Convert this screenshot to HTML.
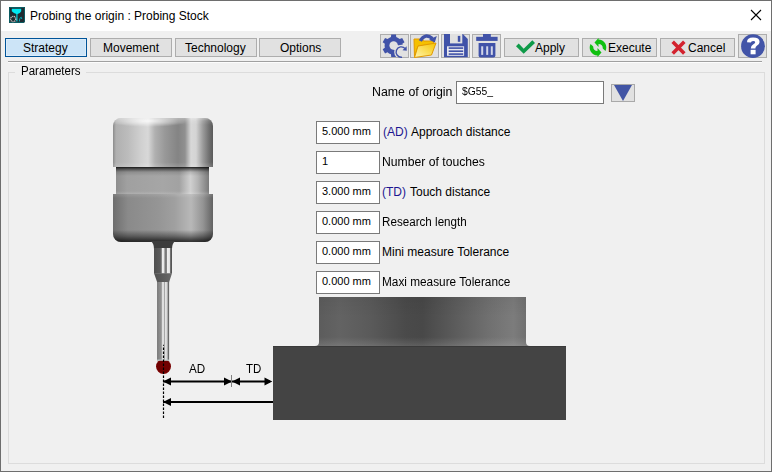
<!DOCTYPE html>
<html><head><meta charset="utf-8">
<style>
*{margin:0;padding:0;box-sizing:border-box}
html,body{width:772px;height:472px;overflow:hidden;background:#f0f0f0}
body{position:relative;font-family:"Liberation Sans",sans-serif;font-size:12px;color:#000}
.a{position:absolute}
.t{position:absolute;white-space:nowrap;line-height:14px;font-size:12px}
.btn{position:absolute;background:#e1e1e1;border:1px solid #adadad}
.ib{position:absolute;background:#e1e1e1;border:1px solid #adadad;top:34px;width:29px;height:24px}
.inp{position:absolute;background:#fff;border:1px solid #7a7a7a;left:316px;width:64px;height:23px}
.inpt{position:absolute;left:322px;font-size:11px;line-height:14px;white-space:nowrap}
</style></head><body>
<!-- window frame -->
<div class="a" style="left:0;top:0;width:772px;height:472px;border:1px solid #6e6e6e"></div>
<div class="a" style="left:1px;top:1px;width:770px;height:30px;background:#fff"></div>
<!-- title icon -->
<svg class="a" style="left:9px;top:7px" width="16" height="16" viewBox="0 0 16 16">
<path d="M0 0 H16 V14 Q16 16 14 16 H0Z" fill="#1f2a30"/>
<path d="M0.5 0.5 H15.5 V14 Q15.5 15.5 14 15.5 H0.5Z" fill="none" stroke="#0b5c62" stroke-width="1"/>
<path d="M2.8 1.8 H12.2 V4.2 Q11.5 6.4 8 7.2 Q4.5 6.4 2.8 4.2Z" fill="#00e8f2"/>
<rect x="7.3" y="7" width="1.2" height="7.5" fill="#00d0dc"/>
<circle cx="4.2" cy="12" r="2.6" fill="none" stroke="#bdbdbd" stroke-width="1.4" stroke-dasharray="1.2 0.6"/>
<path d="M10.3 14.5 L10.8 11.5 L12.2 10.2 L12.8 12" stroke="#00b8c8" stroke-width="0.9" fill="none"/>
</svg>
<div class="t" style="left:30px;top:9px">Probing the origin : Probing Stock</div>
<svg class="a" style="left:750px;top:9px" width="12" height="12" viewBox="0 0 12 12">
<path d="M1 1 L11 11 M11 1 L1 11" stroke="#000" stroke-width="1.1"/>
</svg>

<!-- tabs -->
<div class="btn" style="left:5px;top:38px;width:82px;height:19px;background:#cce4f7;border-color:#005499;box-shadow:inset 0 0 0 1px #dcecf9"></div>
<div class="t" style="left:23px;top:41px">Strategy</div>
<div class="btn" style="left:90px;top:38px;width:82px;height:19px"></div>
<div class="t" style="left:103px;top:41px">Movement</div>
<div class="btn" style="left:175px;top:38px;width:82px;height:19px"></div>
<div class="t" style="left:185px;top:41px">Technology</div>
<div class="btn" style="left:259px;top:38px;width:82px;height:19px"></div>
<div class="t" style="left:280px;top:41px">Options</div>

<!-- icon buttons -->
<div class="ib" style="left:380px"></div>
<div class="ib" style="left:410px"></div>
<div class="ib" style="left:441px"></div>
<div class="ib" style="left:472px"></div>


<div class="btn" style="left:504px;top:38px;width:75px;height:19px"></div>
<div class="t" style="left:535px;top:41px">Apply</div>
<div class="btn" style="left:582px;top:38px;width:75px;height:19px"></div>
<div class="t" style="left:608px;top:41px">Execute</div>
<div class="btn" style="left:660px;top:38px;width:75px;height:19px"></div>
<div class="t" style="left:688px;top:41px">Cancel</div>
<div class="ib" style="left:738px"></div>
<svg class="a" style="left:0;top:0" width="772" height="62">
<!-- gear -->
<defs><mask id="gm"><rect x="370" y="30" width="50" height="32" fill="#fff"/><circle cx="393.6" cy="45.5" r="4.2" fill="#000"/><circle cx="401.5" cy="52" r="7.3" fill="#000"/><path d="M393.6 45.5 L401.5 52" stroke="#000" stroke-width="6"/></mask></defs>
<path mask="url(#gm)" fill="#4052a8" d="M389.51 37.68 L390.97 37.09 L391.21 34.45 L395.99 34.45 L396.23 37.09 L397.69 37.68 L398.50 38.15 L399.74 39.12 L402.15 38.00 L404.54 42.15 L402.37 43.68 L402.59 45.23 L402.59 46.17 L402.37 47.72 L404.54 49.25 L402.15 53.40 L399.74 52.28 L398.50 53.25 L397.69 53.72 L396.23 54.31 L395.99 56.95 L391.21 56.95 L390.97 54.31 L389.51 53.72 L388.70 53.25 L387.46 52.28 L385.05 53.40 L382.66 49.25 L384.83 47.72 L384.61 46.17 L384.61 45.23 L384.83 43.68 L382.66 42.15 L385.05 38.00 L387.46 39.12 L388.70 38.15Z"/>
<path d="M405.2 48.6 A5.2 5.2 0 1 0 402 57.2" fill="none" stroke="#4052a8" stroke-width="1.4"/>
<path d="M402.5 50.2 L406.8 50.8 L406.6 46.2Z" fill="#4052a8"/>
<!-- folder -->
<path d="M414 39 H422.5 L423.5 41 H433.5 V44.5 L418 46 L414.5 57.5Z" fill="#f5c000" stroke="#e29a00" stroke-width="1"/>
<path d="M418 46 L436 43 L431.5 55 L414.5 57.5Z" fill="url(#fg)" stroke="#e29a00" stroke-width="1"/>
<defs><linearGradient id="fg" x1="0" y1="1" x2="1" y2="0"><stop offset="0" stop-color="#fff6b0"/><stop offset="1" stop-color="#f5c400"/></linearGradient></defs>
<path d="M420.3 41 Q425 32.5 432.5 38.5" fill="none" stroke="#4052a8" stroke-width="3.4"/>
<path d="M429 39.8 L436.8 36 L434.8 42.5Z" fill="#4052a8"/>
<!-- floppy -->
<path d="M444 34 H462.8 L467.8 39 V57.3 H444Z" fill="#4052a8"/>
<rect x="450" y="34" width="12.3" height="9.4" fill="#e1e1e1"/>
<rect x="457.8" y="35.9" width="2.5" height="5.9" fill="#4052a8"/>
<rect x="447" y="46.3" width="17.1" height="9.5" fill="#e8e8ee"/>
<rect x="448.7" y="47.3" width="14.5" height="1.6" fill="#4052a8"/>
<rect x="448.7" y="50.4" width="14.5" height="1.6" fill="#4052a8"/>
<rect x="448.7" y="53.3" width="14.5" height="1.6" fill="#4052a8"/>
<!-- trash -->
<rect x="483" y="34" width="7.8" height="3" fill="#4052a8"/>
<rect x="476.2" y="36.8" width="21.4" height="4.1" fill="#4052a8"/>
<path d="M478.6 43.1 H495.4 V55.6 Q495.4 57.6 493.4 57.6 H480.6 Q478.6 57.6 478.6 55.6Z" fill="#4052a8"/>
<rect x="481.2" y="46.3" width="2" height="8.6" fill="#d0d4e8"/>
<rect x="486.2" y="46.3" width="2" height="8.6" fill="#d0d4e8"/>
<rect x="490.8" y="46.3" width="2" height="8.6" fill="#d0d4e8"/>
<!-- check -->
<path d="M516 46.2 L518.7 43.5 L523.7 48.8 L532.3 40.3 L535 43 L523.7 53.8Z" fill="#0e9a48"/>
<!-- sync -->
<g fill="#10c010">
<path d="M605.5 51 A8 8 0 0 0 598.5 39.5 L598.5 38 L594.5 42.5 L598.5 47 L598.5 44 A4.5 4.5 0 0 1 602.8 48.5 Q604 49.6 605.5 51Z"/>
<path d="M605.5 51 A8 8 0 0 0 598.5 39.5 L598.5 38 L594.5 42.5 L598.5 47 L598.5 44 A4.5 4.5 0 0 1 602.8 48.5 Q604 49.6 605.5 51Z" transform="rotate(180 598 47.5)"/>
</g>
<!-- red x -->
<path d="M672.7 41.8 L684.3 53.4 M684.3 41.8 L672.7 53.4" stroke="#d3222e" stroke-width="3.6"/>
<!-- help -->
<circle cx="753" cy="46.2" r="11.9" fill="#4254a8"/>
<path d="M747 42.2 Q747 37.6 753 37.6 Q759.6 37.6 759.6 42 Q759.6 44.6 756.6 46 Q755.4 46.8 755.4 48.5 H750.8 Q750.8 45.6 753.4 44.2 Q755.2 43.2 755.2 42.2 Q755.2 41 753.1 41 Q751 41 750.9 42.6Z" fill="#fff"/>
<rect x="750.6" y="49.8" width="5" height="4.5" fill="#fff"/>
</svg>

<!-- separator -->
<div class="a" style="left:8px;top:61px;width:754px;height:1px;background:#a0a0a0"></div>
<div class="a" style="left:8px;top:62px;width:754px;height:1px;background:#fcfcfc"></div>

<!-- group box -->
<div class="a" style="left:8px;top:72px;width:757px;height:392px;border:1px solid #dcdcdc"></div>
<div class="a" style="left:15px;top:66px;width:71px;height:12px;background:#f0f0f0"></div>
<div class="t" style="left:20.5px;top:64px;transform:scaleX(.96);transform-origin:0 0">Parameters</div>

<!-- name of origin -->
<div class="t" style="left:371.6px;top:85px;transform:scaleX(1.03);transform-origin:0 0">Name of origin</div>
<div class="a" style="left:456px;top:81px;width:148px;height:23px;background:#fff;border:1px solid #7a7a7a"></div>
<div class="inpt" style="left:462px;top:84px;transform:scaleX(.94);transform-origin:0 0">$G55_</div>
<div class="btn" style="left:611px;top:84px;width:24px;height:18px;border-color:#a9a9a9"></div>
<svg class="a" style="left:611px;top:84px" width="24" height="18"><path d="M3 1 H21 L12 17Z" fill="#4255a5"/></svg>

<!-- inputs -->
<div class="inp" style="top:121px"></div><div class="inpt" style="top:124px">5.000 mm</div>
<div class="t" style="left:383px;top:125px;color:#1c1690">(AD)</div><div class="t" style="left:411px;top:125px">Approach distance</div>
<div class="inp" style="top:151px"></div><div class="inpt" style="top:154px">1</div>
<div class="t" style="left:382px;top:155px;transform:scaleX(1.015);transform-origin:0 0">Number of touches</div>
<div class="inp" style="top:181px"></div><div class="inpt" style="top:184px">3.000 mm</div>
<div class="t" style="left:382px;top:185px;color:#1c1690">(TD)</div><div class="t" style="left:410px;top:185px">Touch distance</div>
<div class="inp" style="top:211px"></div><div class="inpt" style="top:214px">0.000 mm</div>
<div class="t" style="left:382px;top:215px;transform:scaleX(.97);transform-origin:0 0">Research length</div>
<div class="inp" style="top:241px"></div><div class="inpt" style="top:244px">0.000 mm</div>
<div class="t" style="left:382px;top:245px">Mini measure Tolerance</div>
<div class="inp" style="top:271px"></div><div class="inpt" style="top:274px">0.000 mm</div>
<div class="t" style="left:382px;top:275px;transform:scaleX(.984);transform-origin:0 0">Maxi measure Tolerance</div>

<!-- workpiece -->
<svg class="a" style="left:265px;top:290px" width="310" height="135" viewBox="265 290 310 135">
<defs>
<linearGradient id="wpg" x1="319" x2="526" gradientUnits="userSpaceOnUse">
<stop offset="0" stop-color="#5c5c5c"/><stop offset=".1" stop-color="#636363"/><stop offset=".25" stop-color="#5a5a5a"/><stop offset=".42" stop-color="#4a4a4a"/><stop offset=".5" stop-color="#484848"/><stop offset=".63" stop-color="#585858"/><stop offset=".82" stop-color="#707070"/><stop offset=".94" stop-color="#7c7c7c"/><stop offset="1" stop-color="#707070"/>
</linearGradient>
<linearGradient id="wpv" x1="0" x2="0" y1="297" y2="347" gradientUnits="userSpaceOnUse">
<stop offset="0" stop-color="#000" stop-opacity=".05"/><stop offset=".4" stop-color="#000" stop-opacity="0"/><stop offset=".8" stop-color="#fff" stop-opacity="0"/><stop offset=".92" stop-color="#fff" stop-opacity=".08"/><stop offset="1" stop-color="#fff" stop-opacity=".14"/>
</linearGradient>
</defs>
<path d="M319 297 H526 V342 Q526 346 530 346 H315 Q319 346 319 342Z" fill="url(#wpg)"/>
<path d="M319 297 H526 V342 Q526 346 530 346 H315 Q319 346 319 342Z" fill="url(#wpv)"/>
<rect x="273" y="346" width="293" height="74" fill="#444"/>
<rect x="273" y="346" width="293" height="1" fill="#3a3a3a"/>
</svg>
<!-- probe -->
<div class="a" style="left:113px;top:118px;width:100px;height:49px;border-radius:8px 8px 0 0;background:linear-gradient(90deg,#8c8c8c 0%,#b0b0b0 3%,#bcbcbc 15%,#d0d0d0 28%,#d8d8d8 35%,#b0b0b0 42%,#989898 52%,#848484 65%,#909090 72%,#d8d8d8 78%,#d4d4d4 83%,#9a9a9a 90%,#707070 96%,#5a5a5a 100%)"></div>
<div class="a" style="left:113px;top:118px;width:100px;height:49px;border-radius:8px 8px 0 0;background:radial-gradient(ellipse 40px 6px at 35px 3px,rgba(255,255,255,.8),rgba(255,255,255,0) 100%),linear-gradient(180deg,rgba(255,255,255,.35) 0,rgba(255,255,255,.1) 3px,rgba(255,255,255,0) 7px,rgba(255,255,255,0) 44px,rgba(255,255,255,.12) 48px)"></div>

<div class="a" style="left:116px;top:167px;width:93px;height:27px;background:linear-gradient(90deg,#8e8e8e 0%,#a0a0a0 12%,#a6a6a6 50%,#a2a2a2 68%,#d0d0d0 80%,#b4b4b4 88%,#7a7a7a 100%)"></div>
<div class="a" style="left:116px;top:167px;width:93px;height:27px;background:linear-gradient(180deg,rgba(0,0,0,.85) 0,rgba(0,0,0,.5) 2px,rgba(0,0,0,.12) 5px,rgba(0,0,0,0) 9px,rgba(0,0,0,0) 24px,rgba(255,255,255,.15) 27px)"></div>
<div class="a" style="left:113px;top:194px;width:100px;height:48px;border-radius:0 0 8px 8px;background:linear-gradient(90deg,#6e6e6e 0%,#8a8a8a 15%,#959595 45%,#a0a0a0 62%,#b8b8b8 78%,#949494 90%,#626262 100%)"></div>
<div class="a" style="left:113px;top:194px;width:100px;height:48px;border-radius:0 0 8px 8px;background:linear-gradient(180deg,rgba(255,255,255,.12) 0,rgba(0,0,0,0) 4px,rgba(0,0,0,0) 36px,rgba(0,0,0,.35) 42px,rgba(0,0,0,.7) 47px)"></div>
<div class="a" style="left:155.6px;top:358.6px;width:15px;height:15px;border-radius:50%;background:radial-gradient(circle at 50% 45%,#740000 0%,#6e0000 55%,#8e0404 82%,#5c0000 100%)"></div>
<svg class="a" style="left:140px;top:240px" width="50" height="130" viewBox="140 240 50 130">
<defs>
<linearGradient id="stu" x1="0" x2="1"><stop offset="0" stop-color="#4e4e4e"/><stop offset=".35" stop-color="#5a5a5a"/><stop offset=".42" stop-color="#8a8a8a"/><stop offset=".47" stop-color="#eeeeee"/><stop offset=".55" stop-color="#e6e6e6"/><stop offset=".61" stop-color="#7a7a7a"/><stop offset=".69" stop-color="#7a7a7a"/><stop offset=".75" stop-color="#eeeeee"/><stop offset=".86" stop-color="#e6e6e6"/><stop offset=".92" stop-color="#6a6a6a"/><stop offset="1" stop-color="#4a4a4a"/></linearGradient>
<linearGradient id="stl" x1="0" x2="1"><stop offset="0" stop-color="#5a5a5a"/><stop offset=".12" stop-color="#888"/><stop offset=".35" stop-color="#909090"/><stop offset=".41" stop-color="#dedede"/><stop offset=".56" stop-color="#dedede"/><stop offset=".62" stop-color="#a0a0a0"/><stop offset=".7" stop-color="#e4e4e4"/><stop offset=".84" stop-color="#cfcfcf"/><stop offset=".9" stop-color="#808080"/><stop offset="1" stop-color="#505050"/></linearGradient>
<linearGradient id="stt" x1="0" x2="1"><stop offset="0" stop-color="#505050"/><stop offset=".6" stop-color="#5e5e5e"/><stop offset="1" stop-color="#6a6a6a"/></linearGradient>
</defs>
<path d="M150.5 241 H175.5 Q172 243 172 249 H154 Q154 243 150.5 241Z" fill="#3c3c3c"/>
<rect x="154" y="248" width="18" height="25.5" fill="url(#stu)"/>
<path d="M154 273.3 H172 L169.1 282.2 H157.2Z" fill="url(#stt)"/>
<rect x="157.2" y="282" width="11.9" height="78.5" fill="url(#stl)"/><rect x="157.2" y="359.6" width="11.9" height="1" fill="#c4d2d2"/>
</svg>
<!-- dimension lines -->
<svg class="a" style="left:0;top:0" width="772" height="472">
<line x1="163.5" y1="347.5" x2="163.5" y2="418" stroke="#000" stroke-width="1.2" stroke-dasharray="2.4 1.6"/><line x1="163.5" y1="344.8" x2="163.5" y2="345.8" stroke="#000" stroke-width="1"/>
<path d="M163 381.5 H232" stroke="#000" stroke-width="2"/>
<path d="M163 381.5 L171 377.5 V385.5Z M232 381.5 L224 377.5 V385.5Z" fill="#000"/>
<path d="M232 381.5 H270" stroke="#000" stroke-width="2"/>
<path d="M232 381.5 L240 377.5 V385.5Z M272.3 381.5 L264.5 377.5 V385.5Z" fill="#000"/>
<line x1="231.5" y1="375" x2="231.5" y2="387" stroke="#808080" stroke-width="1"/>
<path d="M163 402 H273" stroke="#000" stroke-width="2"/>
<path d="M163 402 L171 398 V406Z" fill="#000"/>
</svg>
<div class="t" style="left:188.7px;top:362px;font-size:12px;transform:scaleX(.97);transform-origin:0 0">AD</div>
<div class="t" style="left:245.5px;top:362px;font-size:12px;transform:scaleX(.955);transform-origin:0 0">TD</div>
</body></html>
